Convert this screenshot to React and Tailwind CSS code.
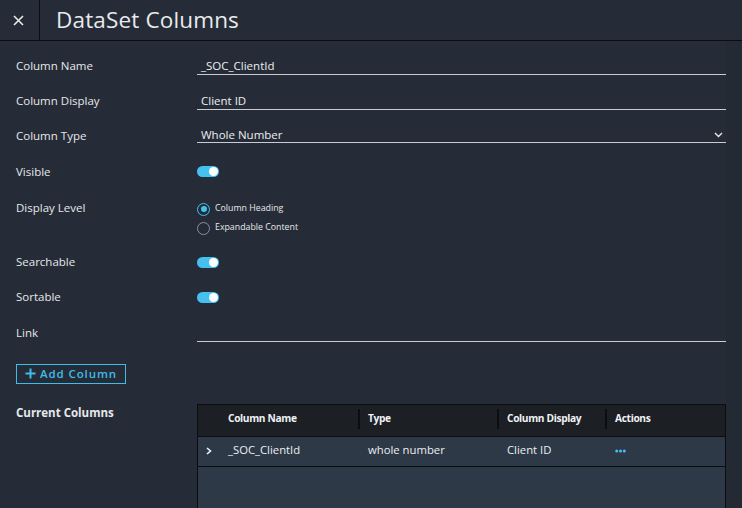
import React from "react";

const font = { fontFamily: '"Open Sans", "Noto Sans", sans-serif' };

function Toggle() {
  return (
    <div className="relative h-[11px] w-[22px] rounded-full bg-[#45c1f0]">
      <div className="absolute right-[1.5px] top-[1px] h-[9px] w-[9px] rounded-full bg-white" />
    </div>
  );
}

function Label({ children, bold }) {
  return (
    <div
      className={`w-[197px] shrink-0 pl-[16px] text-[11.5px] leading-[16px] text-[#e6e8ea] ${
        bold ? "font-bold" : ""
      }`}
    >
      {children}
    </div>
  );
}

function TextInput({ value }) {
  return (
    <div className="flex h-[18px] flex-1 items-center border-b border-[#c9ccd0] pl-[4px] text-[11.5px] text-[#eceef0]">
      {value}
    </div>
  );
}

function Radio({ checked, label }) {
  return (
    <div className="flex h-[19px] items-center gap-[5px]">
      <div
        className={`flex h-[13px] w-[13px] items-center justify-center rounded-full border ${
          checked ? "border-[#45c1f0]" : "border-[#8a9098]"
        }`}
      >
        {checked && <div className="h-[6px] w-[6px] rounded-full bg-[#45c1f0]" />}
      </div>
      <span className="text-[8.8px] text-[#e6e8ea]">{label}</span>
    </div>
  );
}

export default function App() {
  return (
    <div
      className="flex h-[508px] w-[742px] flex-col overflow-hidden bg-[#252c37]"
      style={font}
    >
      {/* Header */}
      <div className="flex h-[41px] shrink-0 border-b border-[#0b0d10]">
        <div className="flex w-[40px] items-center justify-center border-r border-[#0b0d10] pr-[2px]">
          <svg width="11" height="11" viewBox="0 0 11 11">
            <path d="M1 1 L10 10 M10 1 L1 10" stroke="#e8eaec" strokeWidth="1.6" />
          </svg>
        </div>
        <div className="flex items-center pl-[16px] text-[22.5px] tracking-[0.15px] text-[#e8eaec]">
          DataSet Columns
        </div>
      </div>

      <div className="flex flex-1">
        <div className="flex w-[726px] flex-col pt-[7.5px]">
          <div className="flex h-[35px] items-center pr-0">
            <Label>Column Name</Label>
            <TextInput value="_SOC_ClientId" />
          </div>
          <div className="flex h-[35px] items-center">
            <Label>Column Display</Label>
            <TextInput value="Client ID" />
          </div>
          <div className="flex h-[35px] items-center">
            <Label>Column Type</Label>
            <div className="mt-[-2px] flex h-[16px] flex-1 items-center justify-between border-b border-[#c9ccd0] pl-[4px] pr-[3px] text-[11.5px] text-[#eceef0]">
              <span>Whole Number</span>
              <svg width="9" height="6" viewBox="0 0 9 6">
                <path d="M1 1 L4.5 4.5 L8 1" fill="none" stroke="#e8eaec" strokeWidth="1.4" />
              </svg>
            </div>
          </div>
          <div className="flex h-[36px] items-center">
            <Label>Visible</Label>
            <Toggle />
          </div>
          <div className="flex h-[55px] items-start pt-[10px]">
            <Label>Display Level</Label>
            <div className="flex flex-col">
              <Radio checked label="Column Heading" />
              <Radio label="Expandable Content" />
            </div>
          </div>
          <div className="flex h-[35px] items-center">
            <Label>Searchable</Label>
            <Toggle />
          </div>
          <div className="flex h-[35px] items-center">
            <Label>Sortable</Label>
            <Toggle />
          </div>
          <div className="flex h-[36px] items-center">
            <Label>Link</Label>
            <TextInput value="" />
          </div>

          <div className="mt-[13px] pl-[16px]">
            <button className="flex h-[20px] w-[110px] items-center justify-center gap-[4px] border border-[#3fbce9] text-[11.5px] font-semibold tracking-[0.9px] text-[#3fbce9]">
              <svg width="11" height="11" viewBox="0 0 11 11">
                <path d="M5.5 0.5 V10.5 M0.5 5.5 H10.5" stroke="#3fbce9" strokeWidth="2" />
              </svg>
              <span>Add Column</span>
            </button>
          </div>

          <div className="mt-[20px] flex flex-1 items-start">
            <div className="mt-[1px]">
              <Label bold>Current Columns</Label>
            </div>
            <div className="flex h-full flex-1 flex-col border border-b-0 border-[#0b0d10] bg-[#2d3947]">
              <div className="flex h-[32px] items-center border-b border-[#0b0d10] bg-[#1c1f24] pb-[2px] text-[10.2px] font-bold tracking-[-0.35px] text-[#f0f2f4]">
                <div className="w-[20px]" />
                <div className="w-[140px] pl-[10px]">Column Name</div>
                <div className="flex w-[139px] items-center">
                  <div className="h-[20px] w-[2px] bg-[#0b0d10]" />
                  <span className="pl-[8px]">Type</span>
                </div>
                <div className="flex w-[108px] items-center">
                  <div className="h-[20px] w-[2px] bg-[#0b0d10]" />
                  <span className="pl-[8px]">Column Display</span>
                </div>
                <div className="flex flex-1 items-center">
                  <div className="h-[20px] w-[2px] bg-[#0b0d10]" />
                  <span className="pl-[8px]">Actions</span>
                </div>
              </div>
              <div className="flex h-[30px] items-center border-b border-[#0b0d10] pb-[1px] text-[11.3px] text-[#eceef0]">
                <div className="flex w-[20px] items-center justify-center pl-[2px]">
                  <svg width="6" height="8" viewBox="0 0 6 8">
                    <path d="M1 1 L4.5 4 L1 7" fill="none" stroke="#f0f2f4" strokeWidth="1.6" />
                  </svg>
                </div>
                <div className="w-[140px] pl-[10px]">_SOC_ClientId</div>
                <div className="w-[139px] pl-[10px]">whole number</div>
                <div className="w-[108px] pl-[10px]">Client ID</div>
                <div className="flex flex-1 items-center pl-[10px]">
                  <svg width="11" height="4" viewBox="0 0 11 4">
                    <circle cx="1.7" cy="2" r="1.5" fill="#45c1f0" />
                    <circle cx="5.5" cy="2" r="1.5" fill="#45c1f0" />
                    <circle cx="9.3" cy="2" r="1.5" fill="#45c1f0" />
                  </svg>
                </div>
              </div>
              <div className="flex-1" />
            </div>
          </div>
        </div>
        <div className="w-[16px] bg-[#232a34]" />
      </div>
    </div>
  );
}
